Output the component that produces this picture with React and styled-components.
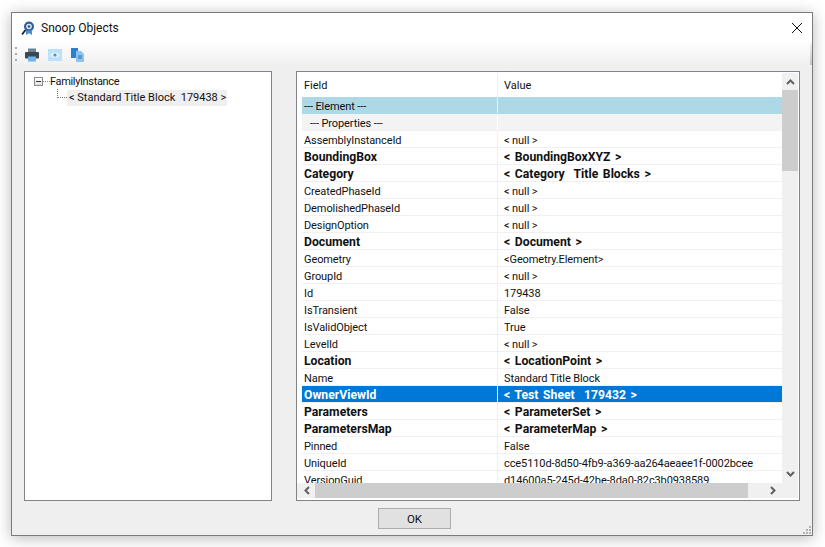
import React from 'react';
import styled, { createGlobalStyle } from 'styled-components';

const Global = createGlobalStyle`
  html, body { margin: 0; padding: 0; background: #fff; }
  body { width: 825px; height: 547px; overflow: hidden; font-family: Roboto, "Open Sans", "Liberation Sans", sans-serif; font-size: 11px; color: #111; }
  * { box-sizing: border-box; }
`;

const Desktop = styled.div`
  width: 825px; height: 547px; padding: 12px 12px 11px 11px;
`;
const Win = styled.div`
  width: 802px; height: 524px; background: #efefef;
  border: 1px solid #7b7b7b;
  box-shadow: 0 2px 14px rgba(0,0,0,.28);
  display: flex; flex-direction: column; position: relative;
`;
const TitleBar = styled.div`
  height: 30px; background: #fff; display: flex; align-items: center; padding: 0 9px 0 9px; flex: none;
`;
const Title = styled.div`
  margin-left: 6px; font-size: 12px; color: #111; flex: 1; line-height: 30px;
`;
const Close = styled.div`width: 12px; height: 12px; display: flex;`;
const Toolbar = styled.div`
  height: 25px; flex: none; display: flex; align-items: flex-start; padding: 4px 0 0 3px; gap: 9px;
  background: linear-gradient(#fdfdfd, #eeeeee); position: relative;
`;
const ToolEdge = styled.div`
  position: absolute; right: 0; top: 0; width: 2px; height: 22px; background: linear-gradient(#f2f2f2, #c4c4c4);
`;
const Grip = styled.div`
  width: 2px; height: 14px; margin-right: -1px;
  background: repeating-linear-gradient(#aaa 0 2px, transparent 2px 6px);
`;
const ToolIcon = styled.svg`
  width: 14px; height: 14px; margin-top: 1px; flex: none;
`;
const Panels = styled.div`
  flex: none; display: flex; gap: 24px; padding: 3px 12px 0 12px; height: 433px;
`;
const TreePanel = styled.div`
  width: 248px; height: 430px; background: #fff; border: 1px solid #82828a; padding: 1px 0 0 9px;
`;
const TreeRow = styled.div`
  display: flex; align-items: center; height: 17px;
`;
const Expander = styled.div`
  width: 9px; height: 9px; border: 1px solid #8c8c8c; background: linear-gradient(#fff, #e0e0e0); position: relative; flex: none;
  &::after { content: ''; position: absolute; left: 1px; right: 1px; top: 3px; height: 1px; background: #333; }
`;
const Dots = styled.div`
  width: 7px; height: 1px; flex: none;
  background: repeating-linear-gradient(90deg, #888 0 1px, transparent 1px 2px);
`;
const TreeLabel = styled.span`
  line-height: 16px; white-space: pre; font-size: 11px; letter-spacing: -0.35px;
`;
const ChildRow = styled(TreeRow)`
  height: 16px; padding-left: 23px;
`;
const Elbow = styled.div`
  width: 10px; height: 9px; margin-top: -9px; flex: none;
  border-left: 1px dotted #777; border-bottom: 1px dotted #777;
`;
const ChildLabel = styled(TreeLabel)`
  background: #efefef; padding: 0 2px; width: 160px; letter-spacing: 0; line-height: 15px; height: 16px;
`;
const GridPanel = styled.div`
  width: 504px; height: 430px; background: #fff; border: 1px solid #82828a; padding: 1px 1px 2px 0;
  display: grid; grid-template-columns: 1fr 16px; grid-template-rows: 1fr 15px;
`;
const GridView = styled.div`
  overflow: hidden; padding-left: 5px; background: #fff;
`;
const Header = styled.div`
  display: grid; grid-template-columns: 196px 1fr; height: 24px; align-items: center;
`;
const HeadCell = styled.div`
  padding-left: 2px; height: 24px; line-height: 25px; border-right: 1px solid #eee;
  &:last-child { padding-left: 6px; border-right: 0; }
`;
const Row = styled.div`
  display: grid; grid-template-columns: 196px 1fr; height: 17px;
  background: ${p => p.$bg || '#fff'}; color: ${p => p.$color || '#111'};
  font-weight: ${p => p.$bold ? 700 : 400};
  border-bottom: 1px solid ${p => p.$line || '#f0f0f0'};
`;
const Cell = styled.div`
  padding-left: 2px; line-height: ${p => p.$bold ? '18px' : '19px'}; height: 16px; white-space: pre; overflow: hidden;
  border-right: 1px solid ${p => p.$line || '#f0f0f0'};
  font-size: ${p => p.$bold ? '12.2px' : '11px'};
  letter-spacing: ${p => p.$bold ? '0' : '-0.1px'};
  word-spacing: ${p => p.$bold ? '1.6px' : '0'};
  &:last-child { padding-left: 6px; border-right: 0; }
`;
const Indented = styled.span`padding-left: ${p => p.$n || 0}px;`;
const VScroll = styled.div`
  background: #f0f0f0; display: flex; flex-direction: column;
`;
const HScroll = styled.div`
  background: #f0f0f0; display: flex; padding-left: 1px;
`;
const ArrowBtn = styled.div`
  flex: none; width: ${p => p.$w}px; height: ${p => p.$h}px; display: flex; align-items: center; justify-content: center;
`;
const VTrack = styled.div`flex: 1;`;
const VThumb = styled.div`height: 81px; background: #cdcdcd;`;
const HTrack = styled.div`flex: 1;`;
const HThumb = styled.div`width: 433px; height: 15px; background: #cdcdcd;`;
const Corner = styled.div`background: #f0f0f0;`;
const Footer = styled.div`
  flex: 1; display: flex; justify-content: center; padding: 4px 0 0 0;
`;
const OkBtn = styled.button`
  width: 73px; height: 21px; background: #e1e1e1; border: 1px solid #adadad; margin: 3px 0 0 5px; padding: 0;
  font-family: inherit; font-size: 11.5px; color: #111;
`;
const Sizer = styled.div`
  position: absolute; right: 1px; bottom: 1px; display: grid; grid-template-columns: repeat(3, 2px); grid-template-rows: repeat(3, 2px); gap: 1px;
`;
const SizerDot = styled.i`
  background: ${p => p.$on ? '#b4b4b4' : 'transparent'};
`;

const rows = [
  ['AssemblyInstanceId', '< null >'],
  ['BoundingBox', '< BoundingBoxXYZ >', 1],
  ['Category', '< Category  Title Blocks >', 1],
  ['CreatedPhaseId', '< null >'],
  ['DemolishedPhaseId', '< null >'],
  ['DesignOption', '< null >'],
  ['Document', '< Document >', 1],
  ['Geometry', '<Geometry.Element>'],
  ['GroupId', '< null >'],
  ['Id', '179438'],
  ['IsTransient', 'False'],
  ['IsValidObject', 'True'],
  ['LevelId', '< null >'],
  ['Location', '< LocationPoint >', 1],
  ['Name', 'Standard Title Block'],
  ['OwnerViewId', '< Test Sheet  179432 >', 1, 1],
  ['Parameters', '< ParameterSet >', 1],
  ['ParametersMap', '< ParameterMap >', 1],
  ['Pinned', 'False'],
  ['UniqueId', 'cce5110d-8d50-4fb9-a369-aa264aeaee1f-0002bcee'],
  ['VersionGuid', 'd14600a5-245d-42be-8da0-82c3b0938589'],
];

const Chev = ({ d }) => (
  <svg width="9" height="7" viewBox="0 0 9 7"><path d={d} fill="none" stroke="#606060" strokeWidth="2" /></svg>
);

export default function App() {
  const sizer = [0, 0, 1, 0, 1, 1, 1, 1, 1];
  return (
    <Desktop>
      <Global />
      <Win>
        <TitleBar>
          <svg width="14" height="15" viewBox="0 0 14 15">
            <circle cx="8" cy="5.5" r="5" fill="#2a5f9a" />
            <circle cx="8" cy="5.5" r="2.8" fill="#dfe9f3" />
            <circle cx="8" cy="5.5" r="1.3" fill="#27507e" />
            <path d="M5 9.5 L5 14 L8 12.2 L11 14 L11 9.5 Z" fill="#4a8fd0" />
            <path d="M4.5 9 L1 13.5" stroke="#1c1c1c" strokeWidth="1.8" />
          </svg>
          <Title>Snoop Objects</Title>
          <Close>
            <svg width="12" height="12" viewBox="0 0 12 12"><path d="M1 1 L11 11 M11 1 L1 11" stroke="#111" strokeWidth="1" /></svg>
          </Close>
        </TitleBar>
        <Toolbar>
          <Grip />
          <ToolIcon viewBox="0 0 14 14">
            <rect x="3" y="0.5" width="8" height="4" fill="#6d8497" />
            <rect x="0" y="4" width="14" height="6.5" rx="1" fill="#3c4650" />
            <rect x="3" y="8.5" width="8" height="5" fill="#6db4ea" />
          </ToolIcon>
          <ToolIcon viewBox="0 0 14 14">
            <rect x="0" y="1" width="14" height="12" fill="#bfe0fa" />
            <ellipse cx="7" cy="7" rx="4.5" ry="2.5" fill="#dff0fb" />
            <circle cx="7" cy="7" r="1.6" fill="#4a9aa6" />
          </ToolIcon>
          <ToolIcon viewBox="0 0 14 14">
            <rect x="0" y="0" width="7" height="10" fill="#2a7fd0" />
            <path d="M5 3 H10 L13 6 V14 H5 Z" fill="#8cc4f0" />
            <path d="M7 8 H11 M7 10 H11" stroke="#2a6fb0" />
          </ToolIcon>
          <ToolEdge />
        </Toolbar>
        <Panels>
          <TreePanel>
            <TreeRow>
              <Expander />
              <Dots />
              <TreeLabel>FamilyInstance</TreeLabel>
            </TreeRow>
            <ChildRow>
              <Elbow />
              <ChildLabel>{'< Standard Title Block  179438 >'}</ChildLabel>
            </ChildRow>
          </TreePanel>
          <GridPanel>
            <GridView>
              <Header>
                <HeadCell>Field</HeadCell>
                <HeadCell>Value</HeadCell>
              </Header>
              <Row $bg="#add8e6" $line="#add8e6">
                <Cell $line="#f0f0f0">--- Element ---</Cell>
                <Cell />
              </Row>
              <Row $bg="#f3f3f3">
                <Cell $line="#fff"><Indented $n={6}>--- Properties ---</Indented></Cell>
                <Cell />
              </Row>
              {rows.map(([f, v, b, sel]) => (
                <Row key={f} $bold={b} $bg={sel ? '#0078d7' : undefined} $color={sel ? '#fff' : undefined}>
                  <Cell $bold={b}>{f}</Cell>
                  <Cell $bold={b}>{v}</Cell>
                </Row>
              ))}
            </GridView>
            <VScroll>
              <ArrowBtn $w={16} $h={17}><Chev d="M1 6 L4.5 2.5 L8 6" /></ArrowBtn>
              <VThumb />
              <VTrack />
              <ArrowBtn $w={16} $h={17}><Chev d="M1 1 L4.5 4.5 L8 1" /></ArrowBtn>
            </VScroll>
            <HScroll>
              <ArrowBtn $w={17} $h={15}><svg width="7" height="9" viewBox="0 0 7 9"><path d="M6 1 L2.5 4.5 L6 8" fill="none" stroke="#606060" strokeWidth="2" /></svg></ArrowBtn>
              <HThumb />
              <HTrack />
              <ArrowBtn $w={17} $h={15}><svg width="7" height="9" viewBox="0 0 7 9"><path d="M1 1 L4.5 4.5 L1 8" fill="none" stroke="#606060" strokeWidth="2" /></svg></ArrowBtn>
            </HScroll>
            <Corner />
          </GridPanel>
        </Panels>
        <Footer>
          <OkBtn>OK</OkBtn>
        </Footer>
        <Sizer>{sizer.map((on, i) => <SizerDot key={i} $on={on} />)}</Sizer>
      </Win>
    </Desktop>
  );
}
